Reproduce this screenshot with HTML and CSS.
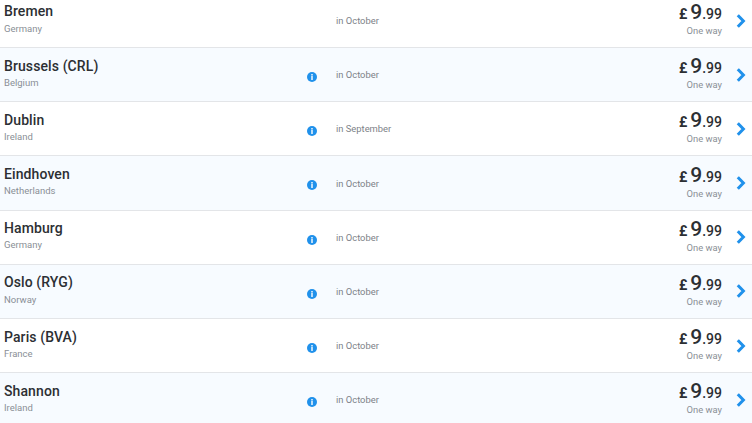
FILE: index.html
```html
<!DOCTYPE html>
<html lang="en">
<head>
<meta charset="utf-8">
<title>Fares</title>
<link rel="stylesheet" href="styles.css">
</head>
<body>
<svg class="defs" width="0" height="0" aria-hidden="true">
  <symbol id="info" viewBox="0 0 10 10"><circle cx="5" cy="5" r="5" fill="#2091eb"/><rect x="4.3" y="2" width="1.4" height="1.4" fill="#fff"/><rect x="4.3" y="3.8" width="1.4" height="4.2" fill="#fff"/></symbol>
  <symbol id="chev" viewBox="0 0 10 14"><path d="M1.8 1.2 L7.4 7 L1.8 12.8" fill="none" stroke="#2091eb" stroke-width="3"/></symbol>
</svg>
<main class="list">
  <div class="row">
    <div class="place"><div class="city">Bremen</div><div class="country">Germany</div></div>
    <div class="note"></div>
    <div class="when">in October</div>
    <div class="fare"><div class="price"><span class="cur">£</span><span class="big">9</span><span class="dec">.99</span></div><div class="way">One way</div></div>
    <svg class="chev"><use href="#chev"/></svg>
  </div>
  <div class="row">
    <div class="place"><div class="city">Brussels (CRL)</div><div class="country">Belgium</div></div>
    <div class="note"><svg class="info"><use href="#info"/></svg></div>
    <div class="when">in October</div>
    <div class="fare"><div class="price"><span class="cur">£</span><span class="big">9</span><span class="dec">.99</span></div><div class="way">One way</div></div>
    <svg class="chev"><use href="#chev"/></svg>
  </div>
  <div class="row">
    <div class="place"><div class="city">Dublin</div><div class="country">Ireland</div></div>
    <div class="note"><svg class="info"><use href="#info"/></svg></div>
    <div class="when">in September</div>
    <div class="fare"><div class="price"><span class="cur">£</span><span class="big">9</span><span class="dec">.99</span></div><div class="way">One way</div></div>
    <svg class="chev"><use href="#chev"/></svg>
  </div>
  <div class="row">
    <div class="place"><div class="city">Eindhoven</div><div class="country">Netherlands</div></div>
    <div class="note"><svg class="info"><use href="#info"/></svg></div>
    <div class="when">in October</div>
    <div class="fare"><div class="price"><span class="cur">£</span><span class="big">9</span><span class="dec">.99</span></div><div class="way">One way</div></div>
    <svg class="chev"><use href="#chev"/></svg>
  </div>
  <div class="row">
    <div class="place"><div class="city">Hamburg</div><div class="country">Germany</div></div>
    <div class="note"><svg class="info"><use href="#info"/></svg></div>
    <div class="when">in October</div>
    <div class="fare"><div class="price"><span class="cur">£</span><span class="big">9</span><span class="dec">.99</span></div><div class="way">One way</div></div>
    <svg class="chev"><use href="#chev"/></svg>
  </div>
  <div class="row">
    <div class="place"><div class="city">Oslo (RYG)</div><div class="country">Norway</div></div>
    <div class="note"><svg class="info"><use href="#info"/></svg></div>
    <div class="when">in October</div>
    <div class="fare"><div class="price"><span class="cur">£</span><span class="big">9</span><span class="dec">.99</span></div><div class="way">One way</div></div>
    <svg class="chev"><use href="#chev"/></svg>
  </div>
  <div class="row">
    <div class="place"><div class="city">Paris (BVA)</div><div class="country">France</div></div>
    <div class="note"><svg class="info"><use href="#info"/></svg></div>
    <div class="when">in October</div>
    <div class="fare"><div class="price"><span class="cur">£</span><span class="big">9</span><span class="dec">.99</span></div><div class="way">One way</div></div>
    <svg class="chev"><use href="#chev"/></svg>
  </div>
  <div class="row">
    <div class="place"><div class="city">Shannon</div><div class="country">Ireland</div></div>
    <div class="note"><svg class="info"><use href="#info"/></svg></div>
    <div class="when">in October</div>
    <div class="fare"><div class="price"><span class="cur">£</span><span class="big">9</span><span class="dec">.99</span></div><div class="way">One way</div></div>
    <svg class="chev"><use href="#chev"/></svg>
  </div>
</main>
</body>
</html>
```
FILE: styles.css
```css
html, body {
  margin: 0;
  padding: 0;
  height: 423px;
  overflow: hidden;
  background: #fff;
  font-family: Roboto, "Liberation Sans", sans-serif;
}
.defs { position: absolute; }
.list { margin-top: -6.1px; }
.row {
  box-sizing: border-box;
  height: 54.2px;
  display: grid;
  grid-template-columns: 302px 30px 1fr auto 30px;
  align-items: center;
  padding-left: 4px;
  border-bottom: 1px solid #e3e5e8;
}
.row:nth-child(even) { background: #f7fbff; }
.place { margin-bottom: 3px; }
.city { font-size: 14px; font-weight: 500; line-height: 18px; color: #2c2f33; letter-spacing: 0.1px; }
.country { font-size: 9.5px; line-height: 14px; margin-top: 1.2px; color: #8a8f96; }
.note { display: flex; justify-content: flex-start; padding-top: 4.5px; }
.info { width: 10px; height: 10px; margin-left: 1px; }
.when { font-size: 9.4px; color: #7d8288; }
.fare { text-align: right; margin-bottom: 2px; }
.price { display: flex; justify-content: flex-end; align-items: baseline; color: #2c2f33; line-height: 20px; }
.cur { font-size: 14px; font-weight: 700; margin-right: 3px; }
.big { font-size: 21px; font-weight: 500; }
.dec { font-size: 14px; font-weight: 500; }
.way { font-size: 9.4px; line-height: 12px; color: #8a8f96; margin-top: 1px; }
.chev { width: 10px; height: 14px; justify-self: end; margin-right: 6px; }
```
